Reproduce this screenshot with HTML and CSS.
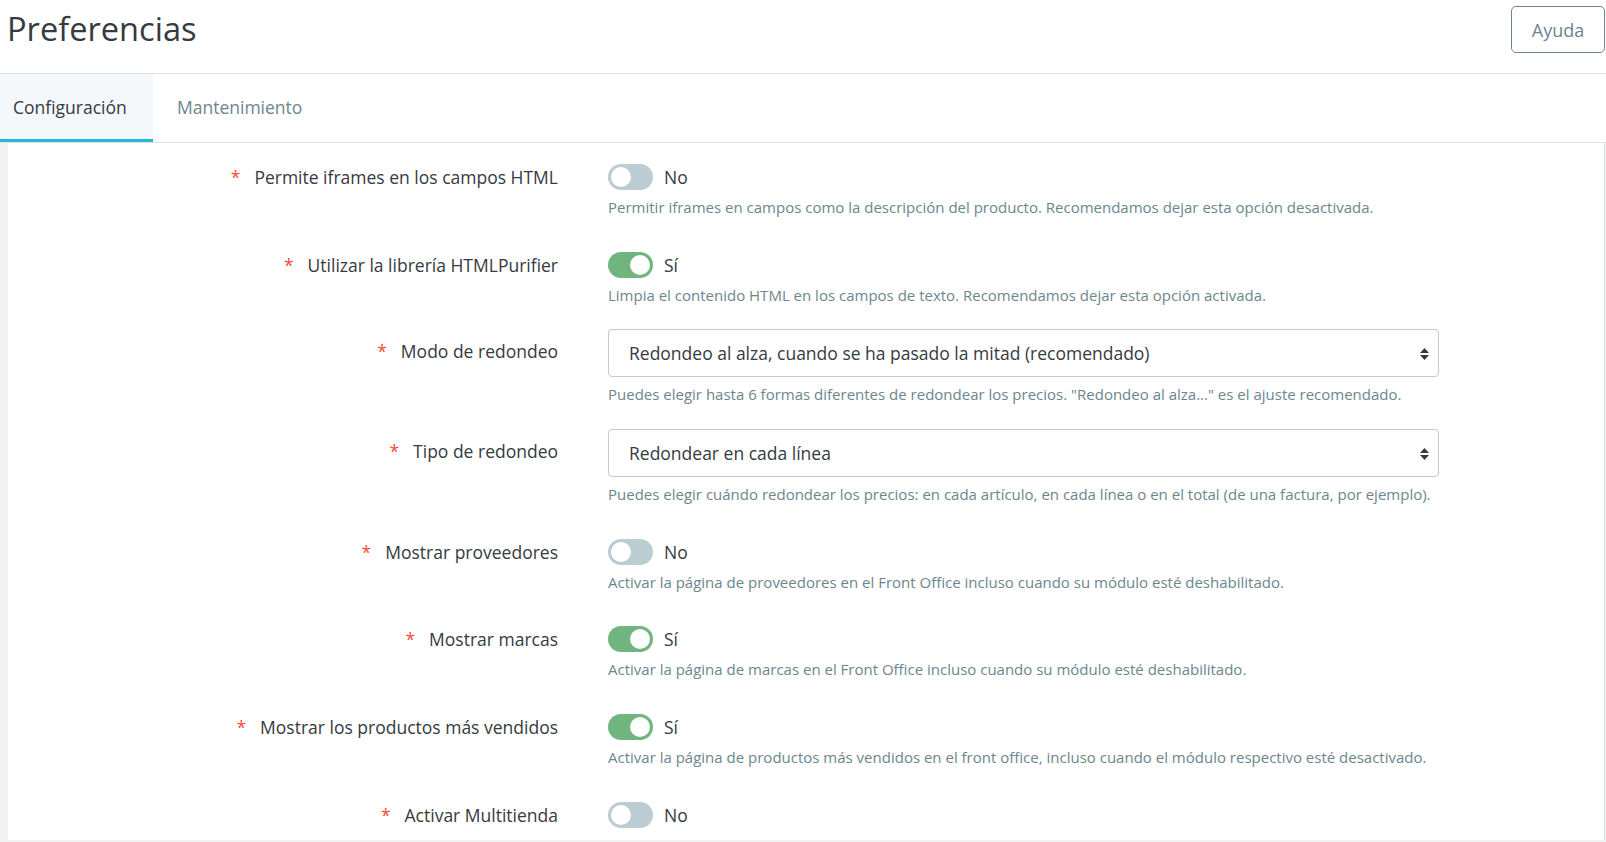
FILE: index.html
```html
<!DOCTYPE html>
<html lang="es">
<head>
<meta charset="utf-8">
<title>Preferencias</title>
<link rel="stylesheet" href="styles.css">
</head>
<body>
<div class="page">
  <header class="header">
    <h1 class="title">Preferencias</h1>
    <button class="help-btn">Ayuda</button>
  </header>
  <nav class="tabs">
    <a class="tab tab-active">Configuración</a>
    <a class="tab">Mantenimiento</a>
  </nav>
  <main class="content">
    <section class="panel">
      <div class="row">
        <label class="label"><span class="req">*</span>Permite iframes en los campos HTML</label>
        <div class="control">
          <div class="switch-wrap"><span class="switch"></span><span class="switch-text">No</span></div>
          <p class="help">Permitir iframes en campos como la descripción del producto. Recomendamos dejar esta opción desactivada.</p>
        </div>
      </div>
      <div class="row">
        <label class="label"><span class="req">*</span>Utilizar la librería HTMLPurifier</label>
        <div class="control">
          <div class="switch-wrap"><span class="switch switch-on"></span><span class="switch-text">Sí</span></div>
          <p class="help">Limpia el contenido HTML en los campos de texto. Recomendamos dejar esta opción activada.</p>
        </div>
      </div>
      <div class="row">
        <label class="label label-select"><span class="req">*</span>Modo de redondeo</label>
        <div class="control">
          <div class="select"><span>Redondeo al alza, cuando se ha pasado la mitad (recomendado)</span>
            <svg class="arrows" width="9" height="12" viewBox="0 0 9 12"><path d="M4.5 0L9 5H0z M4.5 12L0 7h9z" fill="#363a41"/></svg>
          </div>
          <p class="help">Puedes elegir hasta 6 formas diferentes de redondear los precios. "Redondeo al alza..." es el ajuste recomendado.</p>
        </div>
      </div>
      <div class="row">
        <label class="label label-select"><span class="req">*</span>Tipo de redondeo</label>
        <div class="control">
          <div class="select"><span>Redondear en cada línea</span>
            <svg class="arrows" width="9" height="12" viewBox="0 0 9 12"><path d="M4.5 0L9 5H0z M4.5 12L0 7h9z" fill="#363a41"/></svg>
          </div>
          <p class="help">Puedes elegir cuándo redondear los precios: en cada artículo, en cada línea o en el total (de una factura, por ejemplo).</p>
        </div>
      </div>
      <div class="row">
        <label class="label"><span class="req">*</span>Mostrar proveedores</label>
        <div class="control">
          <div class="switch-wrap"><span class="switch"></span><span class="switch-text">No</span></div>
          <p class="help">Activar la página de proveedores en el Front Office incluso cuando su módulo esté deshabilitado.</p>
        </div>
      </div>
      <div class="row">
        <label class="label"><span class="req">*</span>Mostrar marcas</label>
        <div class="control">
          <div class="switch-wrap"><span class="switch switch-on"></span><span class="switch-text">Sí</span></div>
          <p class="help">Activar la página de marcas en el Front Office incluso cuando su módulo esté deshabilitado.</p>
        </div>
      </div>
      <div class="row">
        <label class="label"><span class="req">*</span>Mostrar los productos más vendidos</label>
        <div class="control">
          <div class="switch-wrap"><span class="switch switch-on"></span><span class="switch-text">Sí</span></div>
          <p class="help">Activar la página de productos más vendidos en el front office, incluso cuando el módulo respectivo esté desactivado.</p>
        </div>
      </div>
      <div class="row">
        <label class="label"><span class="req">*</span>Activar Multitienda</label>
        <div class="control">
          <div class="switch-wrap"><span class="switch"></span><span class="switch-text">No</span></div>
        </div>
      </div>
    </section>
  </main>
</div>
</body>
</html>
```
FILE: styles.css
```css
* { box-sizing: border-box; }
html, body { margin: 0; padding: 0; }
body {
  font-family: "Open Sans", "Noto Sans", sans-serif;
  color: #363a41;
  background: #eff1f2;
  width: 1606px;
  height: 842px;
  overflow: hidden;
}
.page { display: flex; flex-direction: column; height: 842px; }
.header {
  height: 74px;
  background: #fff;
  border-bottom: 1px solid #dfe3e6;
  display: flex;
  justify-content: space-between;
  align-items: flex-start;
  padding: 0 1px 0 7px;
}
.title {
  margin: 0;
  padding-top: 8px;
  font-size: 32.6px;
  font-weight: 400;
  line-height: 42px;
  color: #363a41;
}
.help-btn {
  margin-top: 6px;
  width: 94px;
  height: 47px;
  background: #fff;
  border: 1px solid #6c868e;
  border-radius: 5px;
  color: #6c868e;
  font-family: "Open Sans", sans-serif;
  font-size: 18px;
  padding: 0;
}
.tabs {
  display: flex;
  height: 69px;
  background: #fff;
  border-bottom: 1px solid #dfe3e6;
}
.tab {
  display: flex;
  align-items: center;
  height: 68px;
  padding: 0 24px 2px 24px;
  font-size: 17.5px;
  color: #6c868e;
}
.tab-active {
  padding-left: 13px;
  width: 153px;
  background: #f4f8fb;
  color: #363a41;
  border-bottom: 3px solid #25b9d7;
  padding-top: 0;
  padding-bottom: 0;
}
.content {
  flex: 1;
  padding: 0 1px 2px 8px;
  min-height: 0;
}
.panel {
  height: 100%;
  overflow: hidden;
  background: #fff;
  border-right: 1px solid #dfe3e6;
  padding-top: 11px;
}
.row { display: flex; margin-bottom: 23.7px; }
.label {
  width: 550px;
  flex: none;
  text-align: right;
  padding-top: 10px;
  font-size: 17.5px;
  line-height: 26px;
  color: #363a41;
}
.label-select { padding-top: 9px; }
.req {
  color: #f54c3e;
  margin-right: 14px;
}
.control { margin-left: 50px; width: 831px; }
.switch-wrap {
  display: flex;
  align-items: center;
  padding-top: 10px;
  height: 36px;
}
.switch {
  position: relative;
  width: 45px;
  height: 26px;
  border-radius: 13px;
  background: #bbcdd2;
  flex: none;
}
.switch::after {
  content: "";
  position: absolute;
  top: 3px;
  left: 3px;
  width: 20px;
  height: 20px;
  border-radius: 50%;
  background: #fff;
}
.switch-on { background: #70b580; }
.switch-on::after { left: 22px; }
.switch-text {
  margin-left: 11px;
  font-size: 17.5px;
  line-height: 26px;
}
.select {
  display: flex;
  align-items: center;
  justify-content: space-between;
  height: 48px;
  border: 1px solid #bbcdd2;
  border-radius: 4px;
  padding: 0 9px 0 20px;
  font-size: 17.5px;
  color: #363a41;
}
.arrows { flex: none; margin-top: 2px; }
.help {
  margin: 6px 0 0 0;
  font-size: 15px;
  line-height: 22px;
  color: #6c868e;
}
```
